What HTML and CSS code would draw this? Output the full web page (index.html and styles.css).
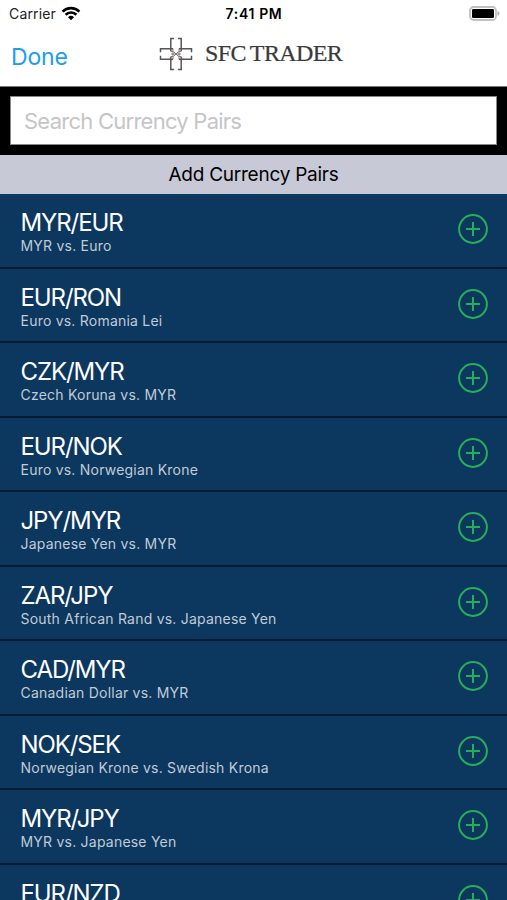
FILE: index.html
```html
<!DOCTYPE html>
<html lang="en">
<head>
    <meta charset="UTF-8">
    <meta name="viewport" content="width=device-width, initial-scale=1.0">
    <title>SFC Trader</title>
    <link rel="stylesheet" href="styles.css">
</head>
<body>
    <svg class="defs" width="0" height="0">
        <symbol id="plus" viewBox="0 0 30 30">
            <circle cx="15" cy="15" r="13.9"/>
            <path d="M8 15h14M15 8v14"/>
        </symbol>
    </svg>
    <div class="status-bar">
        <div class="carrier">
            <span class="carrier-name">Carrier</span>
            <svg class="wifi" width="20" height="15" viewBox="0 0 20 15">
                <path d="M1.6 5.6a12 12 0 0 1 16.8 0M4.6 8.7a7.7 7.7 0 0 1 10.8 0"/>
                <path class="dot" d="M10 14.3l-3-3a4.3 4.3 0 0 1 6 0z"/>
            </svg>
        </div>
        <span class="time">7:41 PM</span>
        <div class="status-right">
            <svg width="32" height="16" viewBox="0 0 32 16">
                <rect x="1" y="1" width="26" height="13" rx="3.5" fill="#fff" stroke="#c0c0c0" stroke-width="1.8"/>
                <rect x="3" y="3" width="22" height="9" rx="1.2" fill="#000"/>
                <path d="M28.5 5v5q2-.8 2-2.5t-2-2.5z" fill="#b0b0b0"/>
            </svg>
        </div>
    </div>
    <div class="header">
        <a class="done" href="#">Done</a>
        <div class="logo">
            <svg width="34" height="34" viewBox="0 0 34 34">
                <path d="M15 1.500h-3.200v12.500M19 1.500h3.200v12.500M15 32.500h-3.200v-12.500M19 32.500h3.200v-12.500"/>
                <path d="M1.500 15.200v-3.400h12.500M1.500 18.800v3.400h12.500M32.500 15.200v-3.400h-12.500M32.500 18.800v3.400h-12.500"/>
                <path class="core" d="M14 11.500v11M20 11.500v11M11.500 14.500h3M11.500 19.500h3M19.500 14.500h3M19.500 19.500h3M12 17h10M15 15l4 4M19 15l-4 4"/>
            </svg>
            <span class="logo-text">SFC TRADER</span>
        </div>
    </div>
    <div class="search">
        <input type="text" class="search-input" placeholder="Search Currency Pairs">
    </div>
    <div class="section-title"><span>Add Currency Pairs</span></div>
    <div class="list">
        <div class="row">
            <div class="pair"><h2>MYR/EUR</h2><p>MYR vs. Euro</p></div>
            <svg class="add"><use href="#plus"/></svg>
        </div>
        <div class="row">
            <div class="pair"><h2>EUR/RON</h2><p>Euro vs. Romania Lei</p></div>
            <svg class="add"><use href="#plus"/></svg>
        </div>
        <div class="row">
            <div class="pair"><h2>CZK/MYR</h2><p>Czech Koruna vs. MYR</p></div>
            <svg class="add"><use href="#plus"/></svg>
        </div>
        <div class="row">
            <div class="pair"><h2>EUR/NOK</h2><p>Euro vs. Norwegian Krone</p></div>
            <svg class="add"><use href="#plus"/></svg>
        </div>
        <div class="row">
            <div class="pair"><h2>JPY/MYR</h2><p>Japanese Yen vs. MYR</p></div>
            <svg class="add"><use href="#plus"/></svg>
        </div>
        <div class="row">
            <div class="pair"><h2>ZAR/JPY</h2><p>South African Rand vs. Japanese Yen</p></div>
            <svg class="add"><use href="#plus"/></svg>
        </div>
        <div class="row">
            <div class="pair"><h2>CAD/MYR</h2><p>Canadian Dollar vs. MYR</p></div>
            <svg class="add"><use href="#plus"/></svg>
        </div>
        <div class="row">
            <div class="pair"><h2>NOK/SEK</h2><p>Norwegian Krone vs. Swedish Krona</p></div>
            <svg class="add"><use href="#plus"/></svg>
        </div>
        <div class="row">
            <div class="pair"><h2>MYR/JPY</h2><p>MYR vs. Japanese Yen</p></div>
            <svg class="add"><use href="#plus"/></svg>
        </div>
        <div class="row">
            <div class="pair"><h2>EUR/NZD</h2></div>
            <svg class="add"><use href="#plus"/></svg>
        </div>
    </div>
</body>
</html>
```

FILE: styles.css
```css
* {
    box-sizing: border-box;
}
body {
    margin: 0;
    height: 900px;
    overflow: hidden;
    display: flex;
    flex-direction: column;
    font-family: Inter, "Liberation Sans", sans-serif;
    background: #fff;
    color: #000;
}
.defs {
    display: none;
}
.status-bar {
    display: grid;
    grid-template-columns: 1fr auto 1fr;
    align-items: center;
    height: 28px;
    flex-shrink: 0;
    padding: 0 6px 0 9px;
}
.carrier {
    display: flex;
    align-items: center;
    gap: 5px;
    margin-top: -2px;
}
.carrier-name {
    font-size: 14px;
    letter-spacing: 0.15px;
    color: #222;
}
.wifi {
    fill: none;
    stroke: #000;
    stroke-width: 2.6;
}
.wifi .dot {
    fill: #000;
    stroke: none;
}
.time {
    margin: -2px 2px 0 0;
    font-size: 14px;
    font-weight: 600;
    letter-spacing: 0.65px;
}
.status-right {
    display: flex;
    justify-content: flex-end;
}
.header {
    display: grid;
    grid-template-columns: 148px 1fr;
    align-items: center;
    height: 58px;
    flex-shrink: 0;
    padding-left: 11px;
}
.done {
    font-size: 23px;
    letter-spacing: -0.2px;
    color: #1c9cf2;
    text-decoration: none;
}
.logo {
    display: flex;
    align-items: center;
    gap: 12px;
    padding-bottom: 7px;
}
.logo svg {
    fill: none;
    stroke: #555;
    stroke-width: 1.5;
}
.logo .core {
    stroke: #766a66;
    stroke-width: 0.9;
}
.logo-text {
    font-family: "Liberation Serif", serif;
    font-size: 24px;
    letter-spacing: -0.6px;
    word-spacing: -1px;
    color: #3a3a3a;
    -webkit-text-stroke: 0.2px #3a3a3a;
}
.search {
    height: 69px;
    flex-shrink: 0;
    padding: 9px 10px;
    background: #000;
    border-top: 1px solid #777;
}
.search-input {
    display: block;
    width: 100%;
    height: 49px;
    padding: 0 13px;
    border: 1px solid #888;
    border-radius: 0;
    outline: none;
    background: #fff;
    font-family: inherit;
    font-size: 22px;
    letter-spacing: -0.75px;
}
.search-input::placeholder {
    color: #c5c5c7;
    opacity: 1;
}
.section-title {
    display: flex;
    align-items: center;
    justify-content: center;
    height: 39px;
    flex-shrink: 0;
    background: #c8c9d6;
    font-size: 19px;
    letter-spacing: -0.25px;
}
.list {
    flex: 1;
    overflow: hidden;
    background: #0c375f;
}
.row {
    display: flex;
    justify-content: space-between;
    align-items: flex-start;
    height: 74.5px;
    padding: 14px 19.5px 0 20.5px;
    border-bottom: 2px solid #031a33;
}
.pair h2 {
    margin: 0;
    font-size: 24px;
    line-height: 29px;
    font-weight: 400;
    letter-spacing: -1.1px;
    color: #fff;
}
.pair p {
    margin: 0;
    font-size: 14px;
    line-height: 17px;
    letter-spacing: 0.22px;
    color: #c0cbd6;
}
.add {
    width: 30px;
    height: 30px;
    margin-top: 6px;
    fill: none;
    stroke: #27ae58;
    stroke-width: 2;
}
```
